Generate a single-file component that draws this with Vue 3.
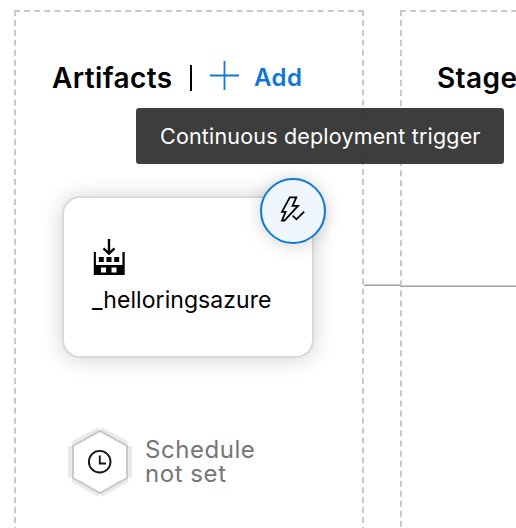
<script setup>
const artifact = '_helloringsazure'
</script>

<template>
  <main class="pipeline">
    <section class="panel artifacts">
      <header class="heading">
        <h2 class="title">Artifacts</h2>
        <span class="divider"></span>
        <button class="add">
          <svg class="plus" width="30" height="30" viewBox="0 0 30 30">
            <path d="M14.500 0V29M0 14.500H29" fill="none" stroke="#0f78d4" stroke-width="1.800" />
          </svg>
          <span class="add-label">Add</span>
        </button>
      </header>

      <article class="card">
        <svg class="build" width="32" height="37" viewBox="0 0 32 37">
          <path d="M16 0V14M10.500 9.300L16 14.500L21.500 9.300" fill="none" stroke="#000" stroke-width="2.400" />
          <path fill="#000" fill-rule="evenodd" d="M0.800 13H2.900V26H29.400V13H31.700V36H0.800ZM8 28.500V33.500H13V28.500ZM18.500 28.500V33.500H23.500V28.500Z" />
          <path fill="#000" d="M5.800 18H10.800V23H5.800ZM13.500 18H18.500V23H13.500ZM21.200 18H26.200V23H21.200Z" />
        </svg>
        <span class="name">{{ artifact }}</span>
        <button class="trigger" aria-label="Continuous deployment trigger">
          <svg width="30" height="30" viewBox="0 0 30 30">
            <path d="M11.800 2.300H18.300L14.600 10.800H20L6.500 25.500H4L7.600 16.800H4Z" fill="none" stroke="#000" stroke-width="1.800" />
            <path d="M14.700 20.600L18.400 24.300L26.200 16.700" fill="none" stroke="#000" stroke-width="1.800" />
          </svg>
        </button>
      </article>

      <div class="schedule">
        <svg class="hexagon" width="64" height="72" viewBox="0 0 64 72">
          <g fill="none" stroke="#e9e9e9" stroke-width="4">
            <path d="M2 20V52M62 20V52M4 18L31 3M33 3L60 18M4 54L31 69M33 69L60 54" />
          </g>
          <path d="M5 20L32 5L59 20V52L32 67L5 52Z" fill="#fff" stroke="#c8c8c8" stroke-width="2" />
          <circle cx="31.700" cy="35.700" r="10.800" fill="none" stroke="#161616" stroke-width="1.900" />
          <path d="M31.800 29.500V37.500H38" fill="none" stroke="#161616" stroke-width="1.900" />
        </svg>
        <p class="schedule-text">Schedule<br />not set</p>
      </div>
    </section>

    <div class="connector"></div>

    <section class="panel stages">
      <header class="heading"><h2 class="title">Stages</h2></header>
      <div class="stage-line"></div>
    </section>

    <div class="tooltip" role="tooltip"><span>Continuous deployment trigger</span></div>
  </main>
</template>

<style>
body {
  background: #fff;
}
</style>

<style scoped>
.pipeline {
  position: relative;
  display: flex;
  width: 516px;
  height: 528px;
  padding: 10px 0 0 14px;
  box-sizing: border-box;
  overflow: hidden;
  background: #fff;
  font-family: Inter, "Liberation Sans", sans-serif;
  color: #000;
}
.panel {
  flex: none;
  box-sizing: border-box;
  border: 2px dashed #c8c8c8;
}
.artifacts {
  width: 350px;
  height: 702px;
}
.stages {
  width: 350px;
  height: 707px;
}
.heading {
  display: flex;
  align-items: center;
  height: 40px;
  margin-top: 46px;
  padding-left: 36px;
}
.stages .heading {
  padding-left: 35px;
}
.title {
  margin: 0;
  font-size: 28px;
  line-height: 40px;
  font-weight: 600;
  letter-spacing: 0.4px;
}
.artifacts .title {
  width: 122px;
}
.divider {
  width: 2px;
  height: 26px;
  margin: 0 18px 0 16px;
  background: #000;
}
.add {
  display: flex;
  align-items: center;
  padding: 0;
  border: 0;
  background: none;
  font: inherit;
  color: #0f78d4;
}
.plus {
  margin-top: -4px;
}
.add-label {
  margin-left: 14px;
  font-size: 24px;
  line-height: 40px;
  font-weight: 600;
  letter-spacing: 0.5px;
}
.card {
  position: relative;
  display: flex;
  flex-direction: column;
  box-sizing: border-box;
  width: 252px;
  height: 162px;
  margin: 98px 0 0 46px;
  padding: 41px 0 0 28px;
  border: 2px solid #dadada;
  border-radius: 18px;
  background: #fff;
  box-shadow: 0 1px 22px rgba(0, 0, 0, 0.18);
}
.build {
  margin-left: 1px;
}
.name {
  margin-top: 10px;
  font-size: 23px;
  line-height: 28px;
  letter-spacing: 0.06px;
}
.trigger {
  position: absolute;
  top: -20px;
  right: -14px;
  display: flex;
  align-items: center;
  justify-content: center;
  box-sizing: border-box;
  width: 66px;
  height: 66px;
  padding: 0 0 2px 0;
  border: 2px solid #0f78d4;
  border-radius: 50%;
  background: #eff6fc;
  box-shadow: 0 1px 18px rgba(0, 0, 0, 0.18);
}
.schedule {
  display: flex;
  margin: 68px 0 0 52px;
}
.schedule-text {
  margin: 12px 0 0 13px;
  font-size: 24px;
  line-height: 24px;
  letter-spacing: 0.55px;
  color: #767676;
}
.connector {
  flex: none;
  width: 36px;
  height: 2px;
  margin-top: 274px;
  background: linear-gradient(#c8c8c8 50%, #a6a6a6 50%);
}
.stage-line {
  height: 2px;
  margin: 187px 0 0 -2px;
  background: linear-gradient(#c8c8c8 50%, #a6a6a6 50%);
}
.tooltip {
  position: absolute;
  left: 136px;
  top: 108px;
  box-sizing: border-box;
  width: 368px;
  height: 56px;
  padding-left: 24px;
  border-radius: 3px;
  background: rgba(51, 51, 51, 0.95);
  color: #fff;
  font-size: 21.500px;
  line-height: 57px;
  letter-spacing: 0.18px;
  white-space: nowrap;
}
</style>
